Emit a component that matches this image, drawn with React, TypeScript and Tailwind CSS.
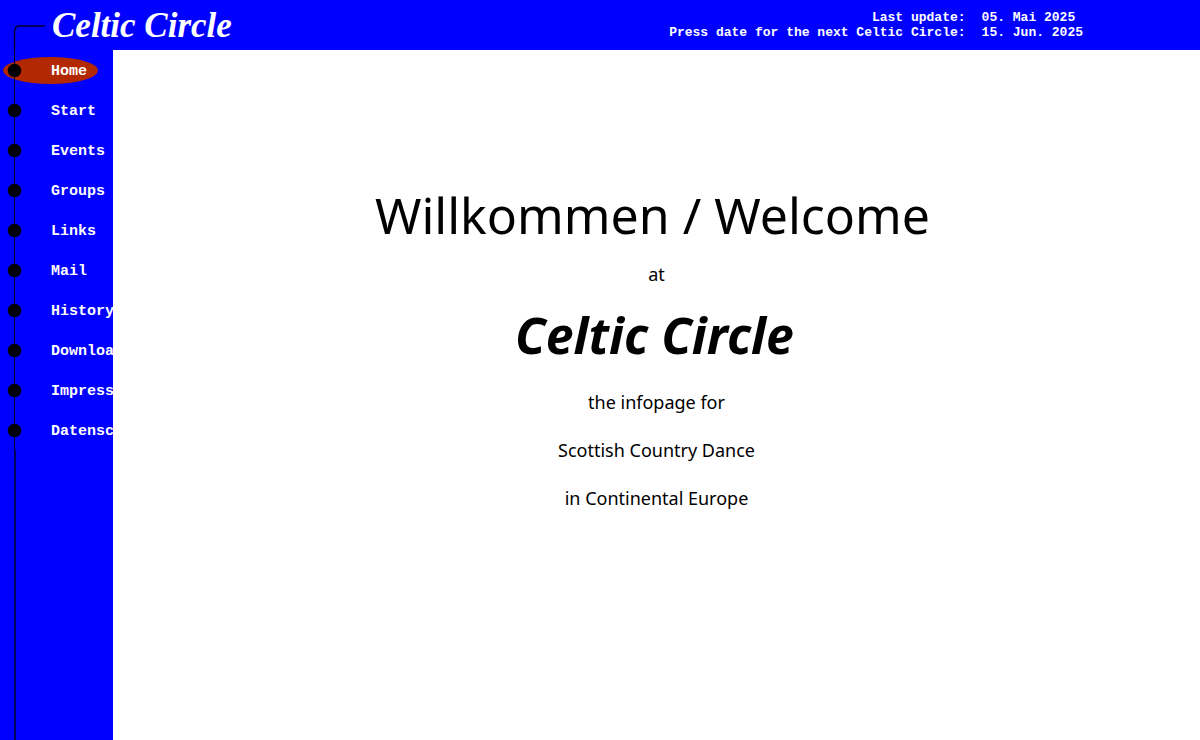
const items = [
  'Home',
  'Start',
  'Events',
  'Groups',
  'Links',
  'Mail',
  'History',
  'Downloads',
  'Impressum',
  'Datenschutz',
];

function Header() {
  return (
    <header className="flex h-[50px] items-start justify-between bg-[#0000ff] pr-[117px] text-white">
      <div className="flex">
        <svg width="52" height="50" viewBox="0 0 52 50" fill="none" aria-hidden="true">
          <path d="M14.5 50V31Q15 26 20 26" stroke="#000030" strokeWidth="1.4" />
          <path d="M18 26H45" stroke="#000060" strokeWidth="2" />
        </svg>
        <span className="font-['Liberation_Serif',serif] text-[35px] leading-[52px] font-bold whitespace-nowrap italic">
          Celtic Circle
        </span>
      </div>
      <dl className="grid grid-cols-[auto_auto] gap-x-4 pt-[10px] font-['Liberation_Mono',monospace] text-[13px] leading-[15px] font-bold whitespace-nowrap">
        <dt className="text-right">Last update:</dt>
        <dd>05. Mai 2025</dd>
        <dt className="text-right">Press date for the next Celtic Circle:</dt>
        <dd>15. Jun. 2025</dd>
      </dl>
    </header>
  );
}

function Navigation() {
  return (
    <nav className="flex w-[113px] shrink-0 flex-col overflow-hidden bg-[#0000ff]">
      <ul>
        {items.map((item, index) => (
          <li key={item}>
            <a
              href={`#${item.toLowerCase()}`}
              className="flex h-10 items-center font-['Liberation_Mono',monospace] text-[15px] leading-5 font-bold text-white"
            >
              <svg width="113" height="40" viewBox="0 0 113 40" className="shrink-0" aria-hidden="true">
                {index === 0 && <ellipse cx="50.5" cy="20.5" rx="47.5" ry="13.5" fill="#b22800" />}
                <rect x="14" width="1" height="40" fill="#000020" />
                <circle cx="14.5" cy="20.5" r="6.8" fill="#000000" />
              </svg>
              <span className="-ml-[62px] pt-1">{item}</span>
            </a>
          </li>
        ))}
      </ul>
      <div className="ml-[14px] w-[2px] grow bg-[#000060]" />
    </nav>
  );
}

export default function App() {
  return (
    <div className="flex min-h-screen flex-col bg-white text-black">
      <Header />
      <div className="flex grow">
        <Navigation />
        <main className="grow pt-[130px] text-center font-['Noto_Sans',sans-serif] text-[18px] leading-6">
          <h1 className="pr-2 text-[50px] leading-[70px]">Willkommen / Welcome</h1>
          <p className="pt-3">at</p>
          <h2 className="pt-[14px] pr-1 text-[50px] leading-[70px] font-bold italic">Celtic Circle</h2>
          <div className="flex flex-col gap-6 pt-5">
            <p>the infopage for</p>
            <p>Scottish Country Dance</p>
            <p>in Continental Europe</p>
          </div>
        </main>
      </div>
    </div>
  );
}
